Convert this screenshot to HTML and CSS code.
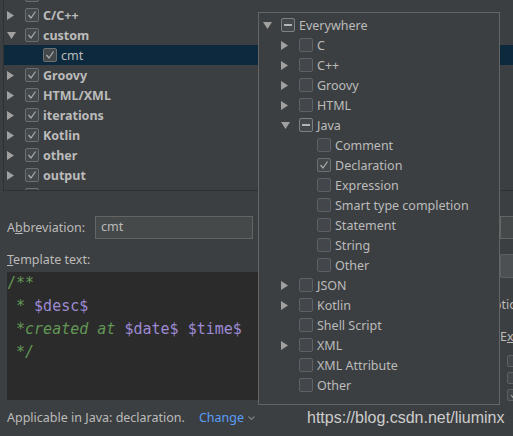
FILE: index.html
```html
<!DOCTYPE html>
<html>
<head>
<meta charset="utf-8">
<link rel="stylesheet" href="styles.css">
</head>
<body>
<div class="tree">
  <ul class="tree-list">
    <li class="row group"><span class="tw"><svg width="7" height="9" viewBox="0 0 7 9"><polygon points="0,0 7,4.5 0,9"/></svg></span><span class="cb"><svg width="12" height="12" viewBox="0 0 12 12"><polyline points="2.5,6 5,9 9.5,2.5"/></svg></span><span class="label">Android</span></li>
    <li class="row group"><span class="tw"><svg width="7" height="9" viewBox="0 0 7 9"><polygon points="0,0 7,4.5 0,9"/></svg></span><span class="cb"><svg width="12" height="12" viewBox="0 0 12 12"><polyline points="2.5,6 5,9 9.5,2.5"/></svg></span><span class="label">C/C++</span></li>
    <li class="row group"><span class="tw"><svg width="9" height="7" viewBox="0 0 9 7"><polygon points="0,0 9,0 4.5,7"/></svg></span><span class="cb"><svg width="12" height="12" viewBox="0 0 12 12"><polyline points="2.5,6 5,9 9.5,2.5"/></svg></span><span class="label">custom</span></li>
    <li class="row selected lvl1"><span class="tw"></span><span class="cb"><svg width="12" height="12" viewBox="0 0 12 12"><polyline points="2.5,6 5,9 9.5,2.5"/></svg></span><span class="label">cmt</span></li>
    <li class="row group"><span class="tw"><svg width="7" height="9" viewBox="0 0 7 9"><polygon points="0,0 7,4.5 0,9"/></svg></span><span class="cb"><svg width="12" height="12" viewBox="0 0 12 12"><polyline points="2.5,6 5,9 9.5,2.5"/></svg></span><span class="label">Groovy</span></li>
    <li class="row group"><span class="tw"><svg width="7" height="9" viewBox="0 0 7 9"><polygon points="0,0 7,4.5 0,9"/></svg></span><span class="cb"><svg width="12" height="12" viewBox="0 0 12 12"><polyline points="2.5,6 5,9 9.5,2.5"/></svg></span><span class="label">HTML/XML</span></li>
    <li class="row group"><span class="tw"><svg width="7" height="9" viewBox="0 0 7 9"><polygon points="0,0 7,4.5 0,9"/></svg></span><span class="cb"><svg width="12" height="12" viewBox="0 0 12 12"><polyline points="2.5,6 5,9 9.5,2.5"/></svg></span><span class="label">iterations</span></li>
    <li class="row group"><span class="tw"><svg width="7" height="9" viewBox="0 0 7 9"><polygon points="0,0 7,4.5 0,9"/></svg></span><span class="cb"><svg width="12" height="12" viewBox="0 0 12 12"><polyline points="2.5,6 5,9 9.5,2.5"/></svg></span><span class="label">Kotlin</span></li>
    <li class="row group"><span class="tw"><svg width="7" height="9" viewBox="0 0 7 9"><polygon points="0,0 7,4.5 0,9"/></svg></span><span class="cb"><svg width="12" height="12" viewBox="0 0 12 12"><polyline points="2.5,6 5,9 9.5,2.5"/></svg></span><span class="label">other</span></li>
    <li class="row group"><span class="tw"><svg width="7" height="9" viewBox="0 0 7 9"><polygon points="0,0 7,4.5 0,9"/></svg></span><span class="cb"><svg width="12" height="12" viewBox="0 0 12 12"><polyline points="2.5,6 5,9 9.5,2.5"/></svg></span><span class="label">output</span></li>
    <li class="row group"><span class="tw"><svg width="7" height="9" viewBox="0 0 7 9"><polygon points="0,0 7,4.5 0,9"/></svg></span><span class="cb"><svg width="12" height="12" viewBox="0 0 12 12"><polyline points="2.5,6 5,9 9.5,2.5"/></svg></span><span class="label">plain</span></li>
  </ul>
</div>

<div class="form">
  <div class="left">
    <div class="abbr-row">
      <span class="abbr-label">A<u>b</u>breviation:</span>
      <span class="input">cmt</span>
    </div>
    <div class="tpl-label"><u>T</u>emplate text:</div>
    <div class="editor"><pre><span class="c">/**</span>
<span class="c"> * </span><span class="v">$desc$</span>
<span class="c"> *<i>created at </i></span><span class="v">$date$</span> <span class="v">$time$</span>
<span class="c"> <i>*/</i></span></pre></div>
    <div class="applic">
      <span>Applicable in Java: declaration.</span>
      <span class="link">Change</span>
      <svg class="chev" width="7" height="5" viewBox="0 0 7 5"><polyline points="0.5,0.5 3.5,3.5 6.5,0.5"/></svg>
    </div>
  </div>
  <div class="right">
    <span class="field"></span>
    <span class="button"></span>
    <div class="opt-title">Options</div>
    <div class="expand">E<u>x</u>pand with</div>
    <div class="opts">
      <span class="small-cb"></span>
      <span class="small-cb"></span>
      <span class="small-cb"><svg width="10" height="10" viewBox="0 0 12 12"><polyline points="2.5,6 5,9 9.5,2.5"/></svg></span>
    </div>
  </div>
</div>

<div class="popup">
  <ul class="pop-list">
    <li class="row"><span class="tw"><svg width="9" height="7" viewBox="0 0 9 7"><polygon points="0,0 9,0 4.5,7"/></svg></span><span class="cb partial"><span class="dash"></span></span><span class="label">Everywhere</span></li>
    <li class="row lvl1"><span class="tw"><svg width="7" height="9" viewBox="0 0 7 9"><polygon points="0,0 7,4.5 0,9"/></svg></span><span class="cb empty"></span><span class="label">C</span></li>
    <li class="row lvl1"><span class="tw"><svg width="7" height="9" viewBox="0 0 7 9"><polygon points="0,0 7,4.5 0,9"/></svg></span><span class="cb empty"></span><span class="label">C++</span></li>
    <li class="row lvl1"><span class="tw"><svg width="7" height="9" viewBox="0 0 7 9"><polygon points="0,0 7,4.5 0,9"/></svg></span><span class="cb empty"></span><span class="label">Groovy</span></li>
    <li class="row lvl1"><span class="tw"><svg width="7" height="9" viewBox="0 0 7 9"><polygon points="0,0 7,4.5 0,9"/></svg></span><span class="cb empty"></span><span class="label">HTML</span></li>
    <li class="row lvl1"><span class="tw"><svg width="9" height="7" viewBox="0 0 9 7"><polygon points="0,0 9,0 4.5,7"/></svg></span><span class="cb partial"><span class="dash"></span></span><span class="label">Java</span></li>
    <li class="row lvl2"><span class="tw"></span><span class="cb empty"></span><span class="label">Comment</span></li>
    <li class="row lvl2"><span class="tw"></span><span class="cb"><svg width="12" height="12" viewBox="0 0 12 12"><polyline points="2.5,6 5,9 9.5,2.5"/></svg></span><span class="label">Declaration</span></li>
    <li class="row lvl2"><span class="tw"></span><span class="cb empty"></span><span class="label">Expression</span></li>
    <li class="row lvl2"><span class="tw"></span><span class="cb empty"></span><span class="label">Smart type completion</span></li>
    <li class="row lvl2"><span class="tw"></span><span class="cb empty"></span><span class="label">Statement</span></li>
    <li class="row lvl2"><span class="tw"></span><span class="cb empty"></span><span class="label">String</span></li>
    <li class="row lvl2"><span class="tw"></span><span class="cb empty"></span><span class="label">Other</span></li>
    <li class="row lvl1"><span class="tw"><svg width="7" height="9" viewBox="0 0 7 9"><polygon points="0,0 7,4.5 0,9"/></svg></span><span class="cb empty"></span><span class="label">JSON</span></li>
    <li class="row lvl1"><span class="tw"><svg width="7" height="9" viewBox="0 0 7 9"><polygon points="0,0 7,4.5 0,9"/></svg></span><span class="cb empty"></span><span class="label">Kotlin</span></li>
    <li class="row lvl1"><span class="tw"></span><span class="cb empty"></span><span class="label">Shell Script</span></li>
    <li class="row lvl1"><span class="tw"><svg width="7" height="9" viewBox="0 0 7 9"><polygon points="0,0 7,4.5 0,9"/></svg></span><span class="cb empty"></span><span class="label">XML</span></li>
    <li class="row lvl1"><span class="tw"></span><span class="cb empty"></span><span class="label">XML Attribute</span></li>
    <li class="row lvl1"><span class="tw"></span><span class="cb empty"></span><span class="label">Other</span></li>
  </ul>
</div>

<div class="watermark">https://blog.csdn.net/liuminx</div>
</body>
</html>
```

FILE: styles.css
```css
html, body {
  margin: 0;
  padding: 0;
  overflow: hidden;
}
body {
  width: 513px;
  height: 436px;
  background: #3c3f41;
  color: #bbbbbb;
  font-family: "Noto Sans", "Open Sans", sans-serif;
  font-size: 12.5px;
  position: relative;
}
ul {
  list-style: none;
  margin: 0;
  padding: 0;
}
.row {
  display: flex;
  align-items: center;
  height: 20px;
  white-space: nowrap;
}
.tw {
  width: 18px;
  flex: none;
  display: flex;
  align-items: center;
}
.tw svg {
  fill: #a0a0a0;
}
.cb {
  width: 14px;
  height: 14px;
  box-sizing: border-box;
  border: 1px solid #6c6f71;
  border-radius: 2px;
  background: #43494a;
  flex: none;
  display: flex;
  align-items: center;
  justify-content: center;
}
.cb svg polyline,
.small-cb svg polyline {
  fill: none;
  stroke: #a9a9a9;
  stroke-width: 1.3;
}
.cb.empty {
  border-color: #5e6163;
  background: #43464a;
}
.cb.partial {
  border-color: #7d8082;
}
.dash {
  width: 8px;
  height: 2px;
  background: #b4b4b4;
}
.label {
  margin-left: 4px;
}

/* left tree */
.tree {
  margin-left: 3px;
  height: 191px;
  box-sizing: border-box;
  border-left: 1px solid #2f3133;
  border-bottom: 1px solid #2f3133;
  overflow: hidden;
}
.tree-list {
  margin-top: -15px;
}
.tree .row {
  padding-left: 3px;
}
.tree .group .label {
  font-weight: bold;
}
.tree .row.lvl1 {
  padding-left: 21px;
}
.tree .row.selected {
  background: #0d293e;
}

/* form */
.form {
  display: grid;
  grid-template-columns: 489px 1fr;
  column-gap: 4px;
  padding-left: 7px;
  margin-top: 25px;
}
.left {
  display: flex;
  flex-direction: column;
}
.abbr-row {
  display: flex;
  align-items: center;
  height: 23px;
}
.abbr-label {
  width: 88px;
  flex: none;
}
.input {
  width: 158px;
  height: 23px;
  box-sizing: border-box;
  background: #45494a;
  border: 1px solid #646464;
  padding-left: 5px;
  line-height: 20px;
}
.tpl-label {
  margin-top: 13px;
  line-height: 16px;
}
.editor {
  margin-top: 4px;
  height: 128px;
  background: #2b2b2b;
}
.editor pre {
  margin: 0;
  font-family: "DejaVu Sans Mono", monospace;
  font-size: 15px;
  line-height: 23px;
}
.c {
  color: #629755;
}
.c i {
  font-style: italic;
}
.v {
  color: #9d8ad3;
}
.applic {
  margin-top: 10px;
  line-height: 16px;
  display: flex;
  align-items: center;
  white-space: nowrap;
}
.link {
  color: #589df6;
  margin-left: 14px;
}
.chev {
  margin-left: 4px;
}
.chev polyline {
  fill: none;
  stroke: #7c7f82;
  stroke-width: 1.2;
}

.right {
  display: flex;
  flex-direction: column;
  white-space: nowrap;
}
.field {
  display: block;
  height: 23px;
  box-sizing: border-box;
  background: #45494a;
  border: 1px solid #646464;
}
.button {
  display: block;
  margin-top: 15px;
  height: 24px;
  box-sizing: border-box;
  background: #4c5052;
  border: 1px solid #5e6060;
  border-radius: 2px;
}
.opt-title {
  margin-top: 19px;
  margin-left: -16px;
  line-height: 16px;
}
.expand {
  margin-top: 16px;
  line-height: 16px;
}
.opts {
  margin-top: 10px;
  margin-left: 7px;
  display: flex;
  flex-direction: column;
  gap: 5px;
}
.small-cb {
  width: 13px;
  height: 12px;
  box-sizing: border-box;
  border: 1px solid #5e6163;
  border-radius: 2px;
  background: #43464a;
  display: flex;
  align-items: center;
  justify-content: center;
}

/* popup */
.popup {
  position: absolute;
  left: 258px;
  top: 12px;
  width: 242px;
  height: 393px;
  box-sizing: border-box;
  border: 1px solid #636567;
  background: #3c3f41;
  padding-top: 2px;
  padding-left: 4px;
}
.pop-list .row.lvl1 {
  padding-left: 18px;
}
.pop-list .row.lvl2 {
  padding-left: 36px;
}

.watermark {
  position: absolute;
  left: 307px;
  top: 409px;
  font-family: "Liberation Sans", Arial, sans-serif;
  font-size: 16px;
  line-height: 18px;
  color: #cdcdcd;
}
```
